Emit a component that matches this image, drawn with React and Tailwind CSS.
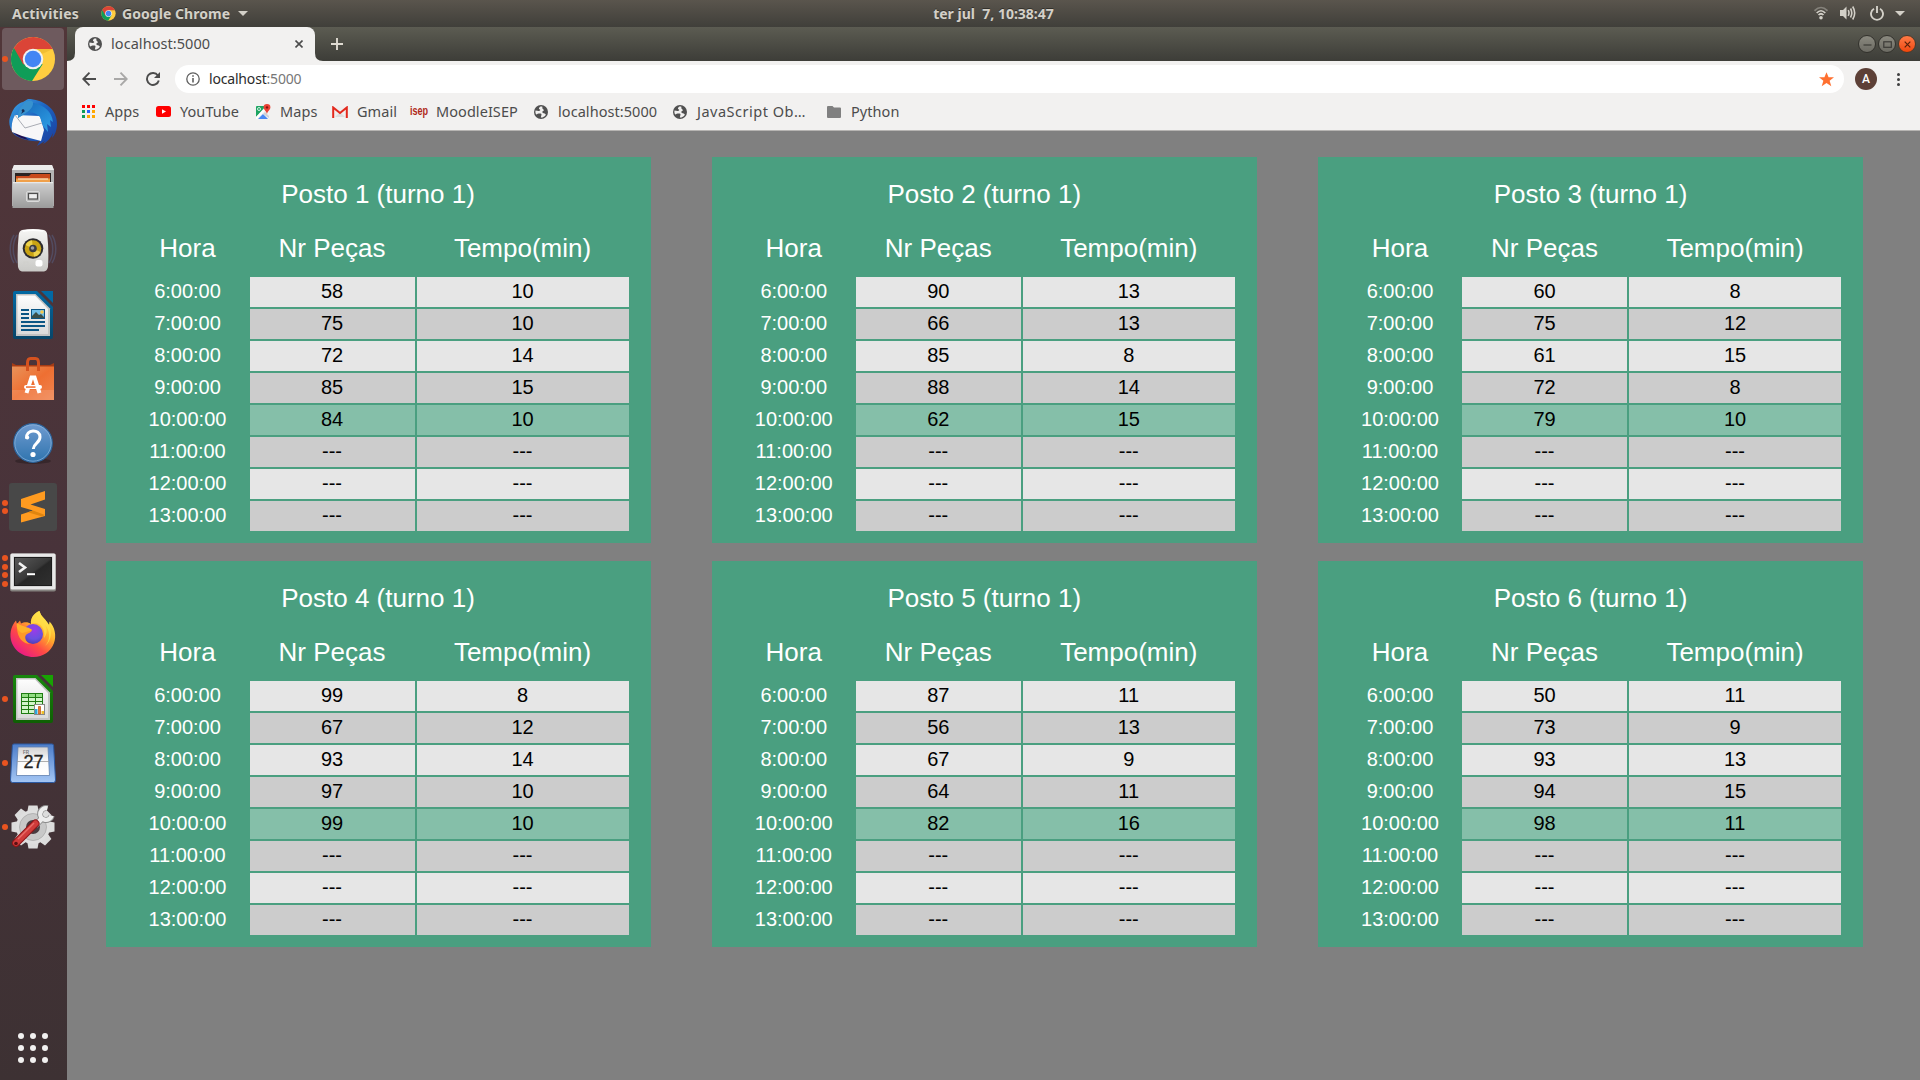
import React from "react";

const HOURS = ["6:00:00", "7:00:00", "8:00:00", "9:00:00", "10:00:00", "11:00:00", "12:00:00", "13:00:00"];
const CARDS = [
  [[58, 10], [75, 10], [72, 14], [85, 15], [84, 10]],
  [[90, 13], [66, 13], [85, 8], [88, 14], [62, 15]],
  [[60, 8], [75, 12], [61, 15], [72, 8], [79, 10]],
  [[99, 8], [67, 12], [93, 14], [97, 10], [99, 10]],
  [[87, 11], [56, 13], [67, 9], [64, 11], [82, 16]],
  [[50, 11], [73, 9], [93, 13], [94, 15], [98, 11]],
];

function Card({ number, rows }) {
  return (
    <section className="flex h-[386px] w-[545px] flex-col bg-[#4a9f80] pl-[22px] pr-[22px] text-white">
      <h2 className="mt-[18px] h-[38px] text-center text-[26px] leading-[38px]">Posto {number} (turno 1)</h2>
      <div className="mt-[9px] grid h-[53px] grid-cols-[120px_165px_212px] gap-x-[2px] text-center text-[26px] leading-[53px]">
        <div>Hora</div>
        <div>Nr Peças</div>
        <div>Tempo(min)</div>
      </div>
      <div className="mt-[2px] flex flex-col gap-[2px]">
        {HOURS.map((h, i) => {
          const v = rows[i] || ["---", "---"];
          const bg = i === 4 ? "bg-[#85bfa9]" : i % 2 ? "bg-[#cccccc]" : "bg-[#e6e6e6]";
          return (
            <div key={h} className="grid h-[30px] grid-cols-[120px_165px_212px] gap-x-[2px] text-center text-[20px] leading-[29px]">
              <div>{h}</div>
              <div className={`${bg} text-black`}>{v[0]}</div>
              <div className={`${bg} text-black`}>{v[1]}</div>
            </div>
          );
        })}
      </div>
    </section>
  );
}

function ChromeIcon({ className }) {
  return (
    <svg viewBox="0 0 48 48" className={className}>
      <circle cx="24" cy="24" r="23" fill="#ffcd40" />
      <path d="M24 24 L4.1 12.5 A23 23 0 0 0 23 47 L34 29.5 Z" fill="#0f9d58" />
      <path d="M4.1 12.5 A23 23 0 0 1 44.5 13.5 L24 13.5 L14 30 Z" fill="#db4437" />
      <path d="M44.5 13.5H24l10 5z" fill="#d6a21c" opacity=".35" />
      <circle cx="24" cy="24" r="10.7" fill="#f1f1f1" />
      <circle cx="24" cy="24" r="8.6" fill="#4285f4" />
    </svg>
  );
}

function Globe({ className }) {
  return (
    <svg viewBox="2 2 20 20" className={className}>
      <circle cx="12" cy="12" r="10" fill="#505050" />
      <path d="M11.2 4.2 C9.2 5.2 8.4 7.4 9.8 8.2 C11.8 8.8 11 10.4 9.4 10.4 C7.6 10.6 6.2 10.2 4.2 9.8 C3.6 12 4.2 14 5.2 15.6 C6.6 14.4 9.4 13.6 11.6 14.2 C13.8 15 12.2 17 11.8 19.9 C14.4 20 17.6 18.4 19 15.8 C18 14 16.8 13.6 14.6 13.4 C13.4 12 14 10.4 16 10.2 C16.4 8.4 14.4 7.6 13.8 6.6 C14.2 5.6 14 4.6 13.6 4.2 Z" fill="#f1f0ef" />
    </svg>
  );
}

function Thunderbird() {
  return (
    <svg viewBox="0 0 48 48" className="size-[48px]">
      <defs>
        <linearGradient id="tb" x1="0" y1="0" x2="1" y2="1"><stop offset="0" stopColor="#3fa9e8" /><stop offset=".45" stopColor="#1d63c0" /><stop offset="1" stopColor="#1a3c9c" /></linearGradient>
        <linearGradient id="tb2" x1="0" y1="0" x2="1" y2="1"><stop offset="0" stopColor="#1565b8" /><stop offset="1" stopColor="#2fa2e8" /></linearGradient>
      </defs>
      <path d="M19 0 C33 0 48 9 48 25 C48 31 46 36 43 39 L44 34 C42 39 38 43 34 45 L36 42 L28 47 L31 42 C20 43 8 39 4 34 C0 28 -1 22 2 16 C4 9 9 4 14 3 Z" fill="url(#tb)" />
      <path d="M4 33 C8 38 14 40 20 41 L10 34 Z" fill="#1f0f52" />
      <path d="M6 16 L31 17 L35 31 L32 42 L13 37 L3 33 C2 28 3 21 6 16 Z" fill="#f7f7f8" />
      <path d="M6 16 L16 29 L33 24" fill="none" stroke="#a9acb4" strokeWidth="1" />
      <path d="M9 19 C11 7 18 3 25 4 C35 6 43 13 44 23 L41 21 L42 28 L38 25 L39 33 L34 27 L31 18 C26 13 20 12 15 15 Z" fill="url(#tb2)" />
      <path d="M14 6 C16 1 22 1 24 3 C25 10 17 14 9 19 C9 13 10 9 14 6Z" fill="#3792cf" />
      <path d="M14 11 L16 12 L12 15Z" fill="#142b57" />
      <circle cx="14" cy="11.5" r="1.3" fill="#172d54" />
    </svg>
  );
}

function Files() {
  return (
    <svg viewBox="0 1 48 48" className="size-[48px]">
      <defs>
        <linearGradient id="fl" x1="0" y1="0" x2="0" y2="1"><stop offset="0" stopColor="#cfcfcf" /><stop offset="1" stopColor="#9b9b9b" /></linearGradient>
      </defs>
      <path d="M5 3h38l2 5v36H3V8z" fill="#b4b4b4" />
      <path d="M5 3h38l2 5H3z" fill="#ececec" />
      <rect x="6" y="11" width="36" height="9" fill="#2c2321" />
      <path d="M7 14h13l2-2h19v8H7z" fill="#c84a1c" />
      <path d="M7 16.5h34v4H7z" fill="#f0a04a" />
      <path d="M9 17h30" stroke="#fff1d8" strokeWidth="1" />
      <path d="M4 20h40l.5 23v3h-41v-3z" fill="url(#fl)" />
      <path d="M4 20.7h40" stroke="#e8e8e8" strokeWidth="1.2" />
      <rect x="17.5" y="29.500" width="13" height="10" rx="1.500" fill="#bdbdbd" stroke="#dadada" />
      <rect x="19.500" y="31.500" width="9" height="5.500" fill="#eee" stroke="#4f4f4f" strokeWidth="1.200" />
    </svg>
  );
}

function Rhythmbox() {
  return (
    <svg viewBox="0 0 48 48" className="size-[48px]">
      <defs><linearGradient id="rb" x1="0" y1="0" x2="0" y2="1"><stop offset="0" stopColor="#f6f6f4" /><stop offset="1" stopColor="#c9c9c6" /></linearGradient></defs>
      <g fill="none" stroke="#58658f" strokeWidth="1.500" opacity=".45">
        <path d="M8 8C3 16 3 28 8 36M5 8C0 16 0 28 5 36M40 8c5 8 5 20 0 28M43 8c5 8 5 20 0 28" />
      </g>
      <path d="M13 3Q24 1 35 3Q38 4 38.300 8Q40 24 39 40Q38 44 35 44.500H13Q10 44 9 40Q8 24 9.700 8Q10 4 13 3Z" fill="url(#rb)" />
      <path d="M14 4Q24 2.500 34 4" stroke="#fff" strokeWidth="1.500" fill="none" />
      <circle cx="24" cy="21.500" r="10.300" fill="#2d2c2e" />
      <circle cx="24" cy="21.500" r="8.300" fill="#c9a313" />
      <path d="M24 21.500L16.500 18A8.300 8.300 0 0 1 23 13.300zM24 21.500l7.500 3.500a8.300 8.300 0 0 1-6.500 4.800z" fill="#ecd14a" />
      <circle cx="24" cy="21.500" r="3.800" fill="#3b3b40" /><circle cx="23.500" cy="21" r="1.800" fill="#9d9da4" />
      <rect x="26.500" y="33" width="7" height="6.500" rx="2" fill="#fff" />
      <rect x="15" y="35" width="4" height="4" fill="none" stroke="#cfcfcc" />
    </svg>
  );
}

function OfficeDoc({ calc }) {
  const base = calc ? "#18870d" : "#0369a3";
  const dark = calc ? "#0f5f04" : "#084568";
  const id = calc ? "calcEdge" : "writerEdge";
  return (
    <svg viewBox="0 0 48 48" className="size-[48px]">
      <defs>
        <linearGradient id={id} x1="0" y1="0" x2="0" y2="1"><stop offset="0" stopColor={base} /><stop offset="1" stopColor={dark} /></linearGradient>
        <linearGradient id={id + "P"} x1="0" y1="0" x2="0" y2="1"><stop offset="0" stopColor="#fdfdfd" /><stop offset="1" stopColor="#dadada" /></linearGradient>
      </defs>
      <path d="M6 0h22l16 16v30q0 2-2 2H6q-2 0-2-2V2q0-2 2-2z" fill={`url(#${id})`} />
      <path d="M7 3h19.500L41 17.500V45H7z" fill="#c2c2c2" />
      <path d="M8.500 4.500H26L39 18v25H8.500z" fill={`url(#${id}P)`} />
      <path d="M32 0h12v12z" fill={calc ? "#18a303" : "#0369a3"} />
      {calc ? (
        <g>
          <rect x="12" y="18" width="22" height="21" fill="#1f7c12" />
          {[0, 1, 2, 3, 4].map((r) => [0, 1, 2].map((c) => (
            <rect key={`${r}-${c}`} x={13 + c * 7} y={19 + r * 4} width="6" height="3" fill={r === 0 ? "#92dd83" : "#d3f5cb"} />
          )))}
          <rect x="25.500" y="29.500" width="10" height="10" fill="#fff" stroke="#888" />
          <path d="M26 34h2.500v5H26z" fill="#2ea5dc" /><path d="M29.500 31.500h2v7.500h-2z" fill="#e97a2a" stroke="#b95011" strokeWidth=".7" /><path d="M32.500 36H35v3h-2.500z" fill="#efc029" />
        </g>
      ) : (
        <g>
          <path d="M12 19h8M12 23h8M12 27h8M12 31h24M12 35h24M12 39h18" stroke="#0b5584" strokeWidth="2" />
          <rect x="22.500" y="18.500" width="13" height="9" fill="#6fbde8" stroke="#0b5584" />
          <path d="M23 27v-2l4-4 3 3 2-1 3 3v1z" fill="#3a4d48" /><circle cx="33" cy="21" r="1.800" fill="#f5c84b" />
        </g>
      )}
    </svg>
  );
}

function Software() {
  return (
    <svg viewBox="0 -1 48 48" className="size-[48px]">
      <defs><linearGradient id="sw" x1="0" y1="0" x2="1" y2="1"><stop offset="0" stopColor="#e8935a" /><stop offset=".5" stopColor="#ee6f32" /><stop offset="1" stopColor="#f08450" /></linearGradient></defs>
      <path d="M3 11V7l4 2h34l4-2v4z" fill="#a63c15" />
      <rect x="3" y="10.500" width="42" height="33.500" fill="url(#sw)" />
      <path d="M3 34h42v10H3z" fill="#fff" opacity=".12" />
      <path d="M18.500 15V7q0-4.500 3-4.500h5q3 0 3 4.500v8" fill="none" stroke="#d4521f" strokeWidth="3" />
      <path d="M17.500 37L22.500 21.500h3L30.500 37" fill="none" stroke="#fff" strokeWidth="4" />
      <rect x="15" y="29" width="18" height="4" rx="2" fill="#fff" />
      <path d="M17 30.300h9.500v1.500H17z" fill="#ef6b2e" />
    </svg>
  );
}

function Help() {
  return (
    <svg viewBox="0 0 48 48" className="size-[48px]">
      <defs><linearGradient id="hp" x1="0" y1="0" x2="0" y2="1"><stop offset="0" stopColor="#6f9bd0" /><stop offset="1" stopColor="#2f74ae" /></linearGradient></defs>
      <ellipse cx="24" cy="42" rx="18" ry="3" fill="#000" opacity=".25" />
      <circle cx="24" cy="24" r="19.300" fill="url(#hp)" stroke="#2b639b" strokeWidth="1.200" />
      <circle cx="24" cy="24" r="18.200" fill="none" stroke="#91b6dd" strokeWidth=".7" />
      <path d="M17.500 19.500C16.500 10 31 9.500 31 18C31 24 24.500 24 24.300 30" fill="none" stroke="#fff" strokeWidth="3" />
      <circle cx="18.300" cy="18.500" r="1.900" fill="#fff" /><circle cx="24" cy="35.500" r="2.600" fill="#fff" />
    </svg>
  );
}

function Sublime() {
  return (
    <svg viewBox="0 0 48 48" className="size-[48px]">
      <rect width="48" height="48" rx="3" fill="#484848" />
      <path d="M12 16L36 8v8.500L21.500 21.500 36 26v7L12 39.500V31.500l12-4-12-3.500z" fill="#ff9b20" />
      <path d="M24 27.500l12 4.500-3 1.500-14-4.300z" fill="#e0850f" />
    </svg>
  );
}

function Terminal() {
  return (
    <svg viewBox="0 -1 48 48" className="size-[48px]">
      <defs><linearGradient id="tm" x1="0" y1="0" x2="1" y2="1"><stop offset="0" stopColor="#5a5a5a" /><stop offset=".5" stopColor="#393939" /><stop offset=".55" stopColor="#272727" /><stop offset="1" stopColor="#303030" /></linearGradient></defs>
      <rect x="1" y="5.500" width="46" height="38" rx="2" fill="#85827f" />
      <rect x="1.500" y="5.500" width="45" height="36" rx="1.500" fill="#e9e9e9" />
      <rect x="4.500" y="8.500" width="39" height="30" fill="#c4c4c4" />
      <rect x="5.500" y="9.500" width="37" height="28" fill="url(#tm)" stroke="#1c1c1c" />
      <path d="M10 15l6 4.500-6 4.500" fill="none" stroke="#f3f3f3" strokeWidth="2.600" />
      <path d="M18 26.200h8" stroke="#fff" strokeWidth="2" />
    </svg>
  );
}

function Firefox() {
  return (
    <svg viewBox="0 1 48 48" className="size-[48px]">
      <defs>
        <linearGradient id="ff" x1=".85" y1=".1" x2=".2" y2=".95"><stop offset="0" stopColor="#fff44f" /><stop offset=".35" stopColor="#ffab2b" /><stop offset=".65" stopColor="#ff4a45" /><stop offset="1" stopColor="#e8178a" /></linearGradient>
        <radialGradient id="fp" cx=".55" cy=".3" r=".75"><stop offset="0" stopColor="#9b3be8" /><stop offset=".6" stopColor="#6a50e0" /><stop offset="1" stopColor="#4a3bae" /></radialGradient>
      </defs>
      <path d="M1.500 27C1 18 5 13 7 10.500L8 14L11 10.500L12 13.500C15 12 19 11.500 22 14C21 7 27 2 30.500 1C32 7 37 9 40 15L40.500 11.500C46 17 47.500 26 45 33C42 41.500 34 47 24.500 47C12 47 2.500 38 1.500 27Z" fill="url(#ff)" />
      <circle cx="24" cy="24" r="10" fill="url(#fp)" />
      <path d="M8 17C14 19 17 20 23 20C22 23 19 23 17 25C15 27 17 33 22 34C14 34 8 28 8 17Z" fill="#ff9a28" />
      <path d="M8 13C12 16 19 17 23 19.500C20 22 16 22 13 23C9 21 7 18 8 13Z" fill="#ffb32a" />
      <path d="M22 14C31 11 37 19 35 28C39 23 38 18 36 15C41 20 42 30 36 36C43 31 43 20 40 15C37 9 32 7 30.500 1C27 2 21 7 22 14Z" fill="#ffe14b" opacity=".75" />
    </svg>
  );
}

function Calendar() {
  return (
    <svg viewBox="0 0 48 48" className="size-[48px]">
      <defs>
        <linearGradient id="cl" x1="0" y1="0" x2="0" y2="1"><stop offset="0" stopColor="#4c7dc9" /><stop offset="1" stopColor="#a4c6f4" /></linearGradient>
        <linearGradient id="cp" x1="0" y1="0" x2="0" y2="1"><stop offset="0" stopColor="#d2d2d2" /><stop offset=".5" stopColor="#fafafa" /><stop offset="1" stopColor="#fff" /></linearGradient>
      </defs>
      <path d="M5 5h38q1.500 0 1.600 1.500L46.500 41q0 2.500-2 2.500h-41q-2 0-2-2.500L3.400 6.500Q3.500 5 5 5z" fill="url(#cl)" stroke="#2c5aa3" strokeWidth="1" />
      <path d="M9 8h30l1.500 28.500h-33z" fill="url(#cp)" stroke="#5f7fae" strokeWidth=".8" />
      <path d="M8 22.500h32" stroke="#999" strokeWidth=".8" />
      <text x="14" y="15" fontSize="4.500" fontFamily="Liberation Sans, sans-serif" fontWeight="bold" fill="#777">FR</text>
      <text x="24.500" y="29" fontSize="18" textAnchor="middle" fontFamily="Liberation Sans, sans-serif" fill="#222" stroke="#222" strokeWidth=".3">27</text>
    </svg>
  );
}

function Settings() {
  return (
    <svg viewBox="0 0 48 48" className="size-[48px]">
      <g transform="translate(24 24)">
        {[0, 45, 90, 135].map((a) => (
          <path key={a} transform={`rotate(${a})`} d="M-4.500-21.500h9l1 5v33l-1 5h-9l-1-5v-33z" fill="#dcdcdc" />
        ))}
        <circle r="17" fill="#dfdfdf" /><circle r="13.500" fill="#c8c8c8" stroke="#aaa" strokeWidth=".8" /><circle r="7" fill="#493c40" />
      </g>
      <path d="M32 16.500L26 22.500" stroke="#8c8c8c" strokeWidth="6.500" />
      <path d="M38.600 5.200A6 6 0 1 0 42.800 12.600" fill="none" stroke="#8c8c8c" strokeWidth="6" />
      <path d="M33 15.500L26 22.500" stroke="#ededed" strokeWidth="4.800" />
      <path d="M38.400 5.400A5.800 5.800 0 1 0 42.600 12.600" fill="none" stroke="#ededed" strokeWidth="4.400" />
      <path d="M26.500 20.500L7 40" stroke="#8e1518" strokeWidth="8" strokeLinecap="round" />
      <path d="M26.500 20.500L7 40" stroke="#cf3b3a" strokeWidth="6" strokeLinecap="round" />
      <path d="M25 20L9 36" stroke="#e86b66" strokeWidth="1.500" />
      <circle cx="7" cy="40.500" r="1.800" fill="#5c1013" />
    </svg>
  );
}

function DockItem({ dots = 0, active, children }) {
  return (
    <div className="flex h-[64px] w-[67px] items-center">
      <div className="z-10 flex w-[9px] flex-col items-end gap-[2.500px] pr-[1px]">
        {Array.from({ length: dots }, (_, i) => <i key={i} className="size-[6px] rounded-full bg-[#e95420]" />)}
      </div>
      <div className={active ? "-ml-[7px] grid size-[62px] place-items-center rounded-[4px] bg-[#6e5a5e]" : "grid w-[48px] place-items-center"}>
        {children}
      </div>
    </div>
  );
}

function Dock() {
  return (
    <nav className="flex h-[1053px] w-[67px] flex-col bg-gradient-to-b from-[#513639] via-[#48333a] to-[#3d3133]">
      <DockItem dots={1} active><ChromeIcon className="size-[46px]" /></DockItem>
      <DockItem><Thunderbird /></DockItem>
      <DockItem><Files /></DockItem>
      <DockItem><Rhythmbox /></DockItem>
      <DockItem><OfficeDoc /></DockItem>
      <DockItem><Software /></DockItem>
      <DockItem><Help /></DockItem>
      <DockItem dots={2}><Sublime /></DockItem>
      <DockItem dots={4}><Terminal /></DockItem>
      <DockItem><Firefox /></DockItem>
      <DockItem dots={1}><OfficeDoc calc /></DockItem>
      <DockItem dots={1}><Calendar /></DockItem>
      <DockItem dots={1}><Settings /></DockItem>
      <div className="mt-auto mb-[17px] ml-[18px] grid w-[30px] grid-cols-3 gap-[6px]">
        {Array.from({ length: 9 }, (_, i) => <i key={i} className="size-[6px] rounded-full bg-[#f2f1f0]" />)}
      </div>
    </nav>
  );
}

function TopBar() {
  return (
    <header className="grid h-[27px] grid-cols-3 items-center bg-gradient-to-b from-[#5a554d] to-[#403f3a] pb-px text-[14px] font-bold text-[#d3d0c8] [text-shadow:0_-1px_0_#33312c]">
      <div className="flex items-center">
        <span className="ml-[12px] w-[89px] tracking-[0.200px]">Activities</span>
        <ChromeIcon className="size-[15px]" />
        <span className="ml-[6px] w-[112px] whitespace-nowrap tracking-[0.050px]">Google Chrome</span>
        <svg viewBox="0 0 10 5" className="ml-[4px] h-[5px] w-[10px]"><path d="M0 0h10L5 5z" fill="#d3d0c8" /></svg>
      </div>
      <div className="whitespace-pre pl-[67px] text-center">ter jul  7, 10:38:47</div>
      <div className="flex items-center justify-end pr-[15px]">
        <svg viewBox="0 0 14 14" className="mr-[12px] size-[14px]" fill="none" strokeWidth="1.700">
          <path d="M.5 4.800Q7-1.800 13.500 4.800" stroke="#85827b" /><path d="M2.700 7Q7 2.500 11.300 7" stroke="#d3d0c8" /><path d="M4.500 9Q7 6.500 9.500 9" stroke="#d3d0c8" /><circle cx="7" cy="11.700" r="1.800" fill="#d3d0c8" />
        </svg>
        <svg viewBox="0 0 16 14" className="mr-[14px] h-[14px] w-[16px]" fill="none" stroke="#d3d0c8" strokeWidth="1.600">
          <path d="M0 4h3l3.500-3.500v13L3 10H0z" fill="#d3d0c8" stroke="none" /><path d="M8.200 4.200q1.600 2.800 0 5.600M10.500 2.500q2.600 4.500 0 9M12.700 .5q4 6.500 0 13" />
        </svg>
        <svg viewBox="0 0 14 15" className="mr-[11px] h-[15px] w-[14px]" fill="none" stroke="#d3d0c8" strokeWidth="1.900">
          <path d="M4 2.700a6 6 0 1 0 6 0M7 0v7" />
        </svg>
        <svg viewBox="0 0 10 5" className="h-[5px] w-[10px]"><path d="M0 0h10L5 5z" fill="#d3d0c8" /></svg>
      </div>
    </header>
  );
}

function WindowButton({ kind }) {
  const close = kind === "close";
  return (
    <span className={`grid size-[18px] place-items-center rounded-full border ${close ? "border-[#4b3a2c] bg-gradient-to-b from-[#ff7b45] to-[#f04505]" : "border-[#33322d] bg-gradient-to-b from-[#8a897f] to-[#6c6b63]"}`}>
      <svg viewBox="0 0 9 9" className="size-[9px]" fill="none" stroke={close ? "#59210a" : "#3c3b37"} strokeWidth="1.200">
        {kind === "min" && <path d="M.5 5h8" />}
        {kind === "max" && <rect x=".8" y="1.800" width="7.500" height="5.500" />}
        {close && <path d="M1.700 1.700l5.600 5.600m0-5.600L1.700 7.300" />}
      </svg>
    </span>
  );
}

function TabStrip() {
  return (
    <div className="flex h-[34px] bg-gradient-to-b from-[#5c5c52] to-[#3d3d38]">
      <svg viewBox="0 0 8 8" className="size-[8px] self-end"><path d="M0 8Q8 8 8 0V8z" fill="#f2f1f0" /></svg>
      <div className="flex w-[240px] items-center rounded-t-[8px] bg-[#f2f1f0]">
        <Globe className="ml-[13px] size-[14px]" />
        <span className="ml-[9px] text-[14.500px] tracking-[0.060px] text-[#4c4c4c]">localhost:5000</span>
        <svg viewBox="0 0 8 8" className="ml-auto mr-[12px] size-[8px]"><path d="M.5.5l7 7m0-7l-7 7" stroke="#4c4c4c" strokeWidth="1.600" /></svg>
      </div>
      <svg viewBox="0 0 8 8" className="size-[8px] self-end"><path d="M8 8Q0 8 0 0V8z" fill="#f2f1f0" /></svg>
      <svg viewBox="0 0 12 12" className="ml-[8px] size-[12px] self-center"><path d="M0 6h12M6 0v12" stroke="#dfdbd2" strokeWidth="1.900" /></svg>
      <div className="ml-auto mr-[4px] flex items-center gap-[2px]">
        <WindowButton kind="min" /><WindowButton kind="max" /><WindowButton kind="close" />
      </div>
    </div>
  );
}

function AddressRow() {
  return (
    <div className="flex h-[36px] items-center pl-[15px]">
      <svg viewBox="0 0 14 14" className="size-[14px]" fill="none" stroke="#4c4c4c" strokeWidth="1.900"><path d="M14 7H1.500M7.500 .700L1.300 7l6.200 6.300" /></svg>
      <svg viewBox="0 0 14 14" className="ml-[18px] size-[14px]" fill="none" stroke="#a9a8a7" strokeWidth="1.900"><path d="M0 7h12.500M6.500 .700L12.700 7l-6.200 6.300" /></svg>
      <svg viewBox="0 0 14 14" className="ml-[18px] size-[14px]" fill="none"><path d="M11.900 3.500A6 6 0 1 0 12.800 8.500" stroke="#4c4c4c" strokeWidth="1.900" /><path d="M14 0v6H8z" fill="#4c4c4c" /></svg>
      <div className="ml-[15px] flex h-[28px] w-[1669px] items-center rounded-full bg-white text-[14px] text-[#2b2b2b]">
        <svg viewBox="0 0 14 14" className="ml-[11px] size-[14px]" fill="none" stroke="#5f5f5f" strokeWidth="1.300"><circle cx="7" cy="7" r="6.200" /><path d="M7 6v4.500M7 3.200v1.600" strokeWidth="1.600" /></svg>
        <span className="ml-[9px] pb-[2px] tracking-[-0.180px]">localhost<span className="text-[#777]">:5000</span></span>
        <svg viewBox="0 0 24 24" className="ml-auto mr-[10px] size-[15px]"><path d="M12 .5l3.300 8H24l-7 5.400 2.700 9L12 17.500 4.300 22.900l2.700-9L0 8.500h8.700z" fill="#ff7030" /></svg>
      </div>
      <span className="ml-[11px] grid size-[22px] place-items-center rounded-full bg-[#5d4037] font-['Roboto',sans-serif] text-[12px] font-medium text-white">A</span>
      <span className="ml-[20px] flex flex-col gap-[2px]"><i className="size-[3px] rounded-full bg-[#3f3f3f]" /><i className="size-[3px] rounded-full bg-[#3f3f3f]" /><i className="size-[3px] rounded-full bg-[#3f3f3f]" /></span>
    </div>
  );
}

const APP_DOTS = ["bg-[#f00]", "bg-[#f00]", "bg-[#f00]", "bg-[#0f9d58]", "bg-[#2962ff]", "bg-[#ffa800]", "bg-[#0f9d58]", "bg-[#ffa800]", "bg-[#ffa800]"];

function Bookmark({ icon, label, width, tracking = "tracking-[0.060px]" }) {
  return (
    <div className={`flex shrink-0 items-center whitespace-nowrap ${width}`}>
      <span className="mr-[9px] grid h-[16px] w-[16px] shrink-0 place-items-center">{icon}</span>
      <span className={tracking}>{label}</span>
    </div>
  );
}

function BookmarkBar() {
  return (
    <div className="flex h-[33px] items-center pb-[4px] pl-[13px] text-[14.500px] text-[#4c4c4c]">
      <Bookmark width="w-[75px]" label="Apps" icon={
        <span className="grid grid-cols-3 gap-[2px]">{APP_DOTS.map((c, i) => <i key={i} className={`size-[3px] ${c}`} />)}</span>
      } />
      <Bookmark width="w-[100px]" label="YouTube" icon={
        <svg viewBox="0 0 15 11" className="h-[11px] w-[15px]"><rect width="15" height="11" rx="2.500" fill="#f00" /><path d="M6 3.200v4.600l4-2.300z" fill="#fff" /></svg>
      } />
      <Bookmark width="w-[77px]" label="Maps" icon={
        <svg viewBox="0 0 16 16" className="size-[16px]">
          <rect x="1" y="2" width="13" height="13" rx="1" fill="#f4f4f4" /><path d="M1 3q0-1 1-1h9L1 13z" fill="#1da462" /><path d="M3 15l5-5 5 5z" fill="#4a89f3" /><path d="M1 15V13L11 3l1 1L2 15z" fill="#fff" /><path d="M8 10l2-2 4 4v2z" fill="#cfd2d6" />
          <circle cx="4" cy="5" r="1.500" fill="none" stroke="#fff" strokeWidth=".8" />
          <path d="M12 0a3.400 3.400 0 0 1 3.400 3.500c0 2.200-2.800 3.500-3.400 6.500-.6-3-3.400-4.300-3.400-6.500A3.400 3.400 0 0 1 12 0z" fill="#ea4335" /><circle cx="12" cy="3.400" r="1.200" fill="#811" />
        </svg>
      } />
      <Bookmark width="w-[79px]" label="Gmail" icon={
        <svg viewBox="0 0 16 12" className="h-[12px] w-[16px]"><path d="M1 1h14v10H1z" fill="#f0eeee" /><path d="M3 11l5-5 5 5z" fill="#ddd" /><path d="M1.200 12V1.500L8 7l6.800-5.500V12" fill="none" stroke="#e3281c" strokeWidth="2" /></svg>
      } />
      <Bookmark width="w-[122px]" label="MoodleISEP" icon={
        <span className="-mt-[3px] flex w-[16px] justify-center">
          <span className="scale-x-[0.700] font-['Liberation_Sans',sans-serif] text-[13px] font-bold leading-none text-[#b0281a]">isep</span>
        </span>
      } />
      <Bookmark width="w-[139px]" label="localhost:5000" icon={<Globe className="size-[14px]" />} />
      <Bookmark width="w-[154px]" label="JavaScript Ob…" tracking="tracking-[0.500px]" icon={<Globe className="size-[14px]" />} />
      <Bookmark width="w-[90px]" label="Python" icon={
        <svg viewBox="0 0 14 12" className="h-[12px] w-[14px]"><path d="M1 0h4.500l1.500 1.500h6q1 0 1 1V11q0 1-1 1H1q-1 0-1-1V1q0-1 1-1z" fill="#808080" /></svg>
      } />
    </div>
  );
}

export default function App() {
  return (
    <div className="h-[1080px] w-[1920px] overflow-hidden bg-[#808080] font-['Noto_Sans','Open_Sans',sans-serif]">
      <TopBar />
      <div className="flex">
        <Dock />
        <div className="flex h-[1053px] w-[1853px] flex-col">
          <TabStrip />
          <div className="h-[70px] border-b border-[#b6b4b2] bg-[#f2f1f0]">
            <AddressRow />
            <BookmarkBar />
          </div>
          <main className="grid grid-cols-[repeat(3,545px)] gap-x-[61.250px] gap-y-[18px] pl-[38.500px] pt-[26px] font-['Liberation_Sans',Arial,sans-serif]">
            {CARDS.map((rows, i) => <Card key={i} number={i + 1} rows={rows} />)}
          </main>
        </div>
      </div>
    </div>
  );
}
